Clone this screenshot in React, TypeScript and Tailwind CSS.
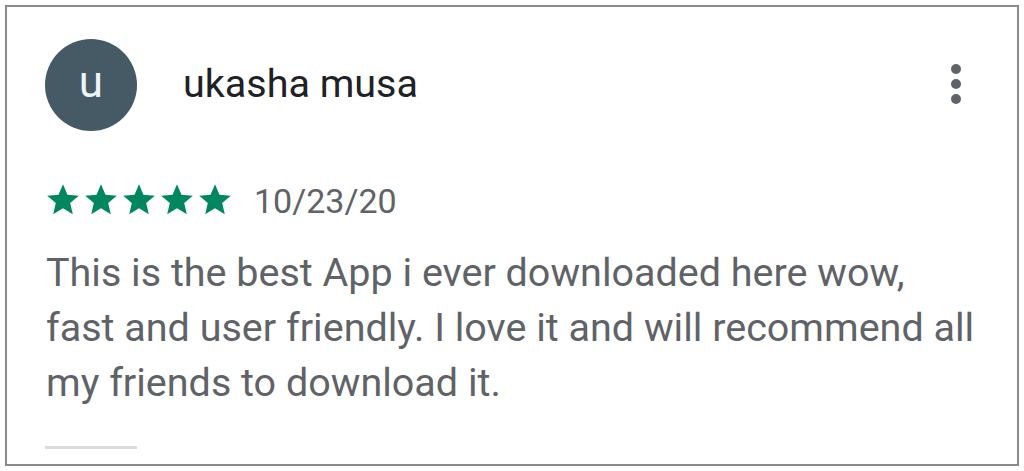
import React from "react";

function Star() {
  return (
    <svg viewBox="0 0 24 24" className="w-[38px] h-[38px]" fill="#01875f">
      <path d="M12 17.27L18.18 21l-1.64-7.03L22 9.24l-7.19-.61L12 2 9.19 8.63 2 9.24l5.46 4.73L5.82 21z" />
    </svg>
  );
}

export default function App() {
  return (
    <div className="w-[1024px] h-[471px] bg-white p-[5px]" style={{ fontFamily: "Roboto, 'Liberation Sans', sans-serif" }}>
      <div className="w-[1014px] h-[461px] border-2 border-[#8a8a8a] flex flex-col pl-[38px] pr-[20px]">
        <div className="flex items-center mt-[32px] h-[92px]">
          <div className="w-[92px] h-[92px] rounded-full bg-[#455a64] flex items-center justify-center text-[#eef3f5] text-[44px] leading-none pb-[6px]">
            u
          </div>
          <div className="ml-[46px] text-[39.5px] text-[#202124] leading-none pb-[2px]">ukasha musa</div>
          <div className="ml-auto flex flex-col gap-[5px] items-center mr-[36px] mt-[-2px]">
            <span className="w-[10px] h-[10px] rounded-full bg-[#5f6368]" />
            <span className="w-[10px] h-[10px] rounded-full bg-[#5f6368]" />
            <span className="w-[10px] h-[10px] rounded-full bg-[#5f6368]" />
          </div>
        </div>
        <div className="flex items-center mt-[50px]">
          <div className="flex ml-[-1px]">
            <Star /><Star /><Star /><Star /><Star />
          </div>
          <div className="ml-[20px] text-[34px] text-[#5f6368] leading-none mt-[2px]">10/23/20</div>
        </div>
        <div className="mt-[26px] text-[39.5px] leading-[55px] text-[#5f6368] pl-[1px] whitespace-nowrap">
          <div>This is the best App i ever downloaded here wow,</div>
          <div>fast and user friendly. I love it and will recommend all</div>
          <div>my friends to download it.</div>
        </div>
        <div className="mt-[36px] w-[92px] h-[3px] bg-[#dadce0]" />
      </div>
    </div>
  );
}
